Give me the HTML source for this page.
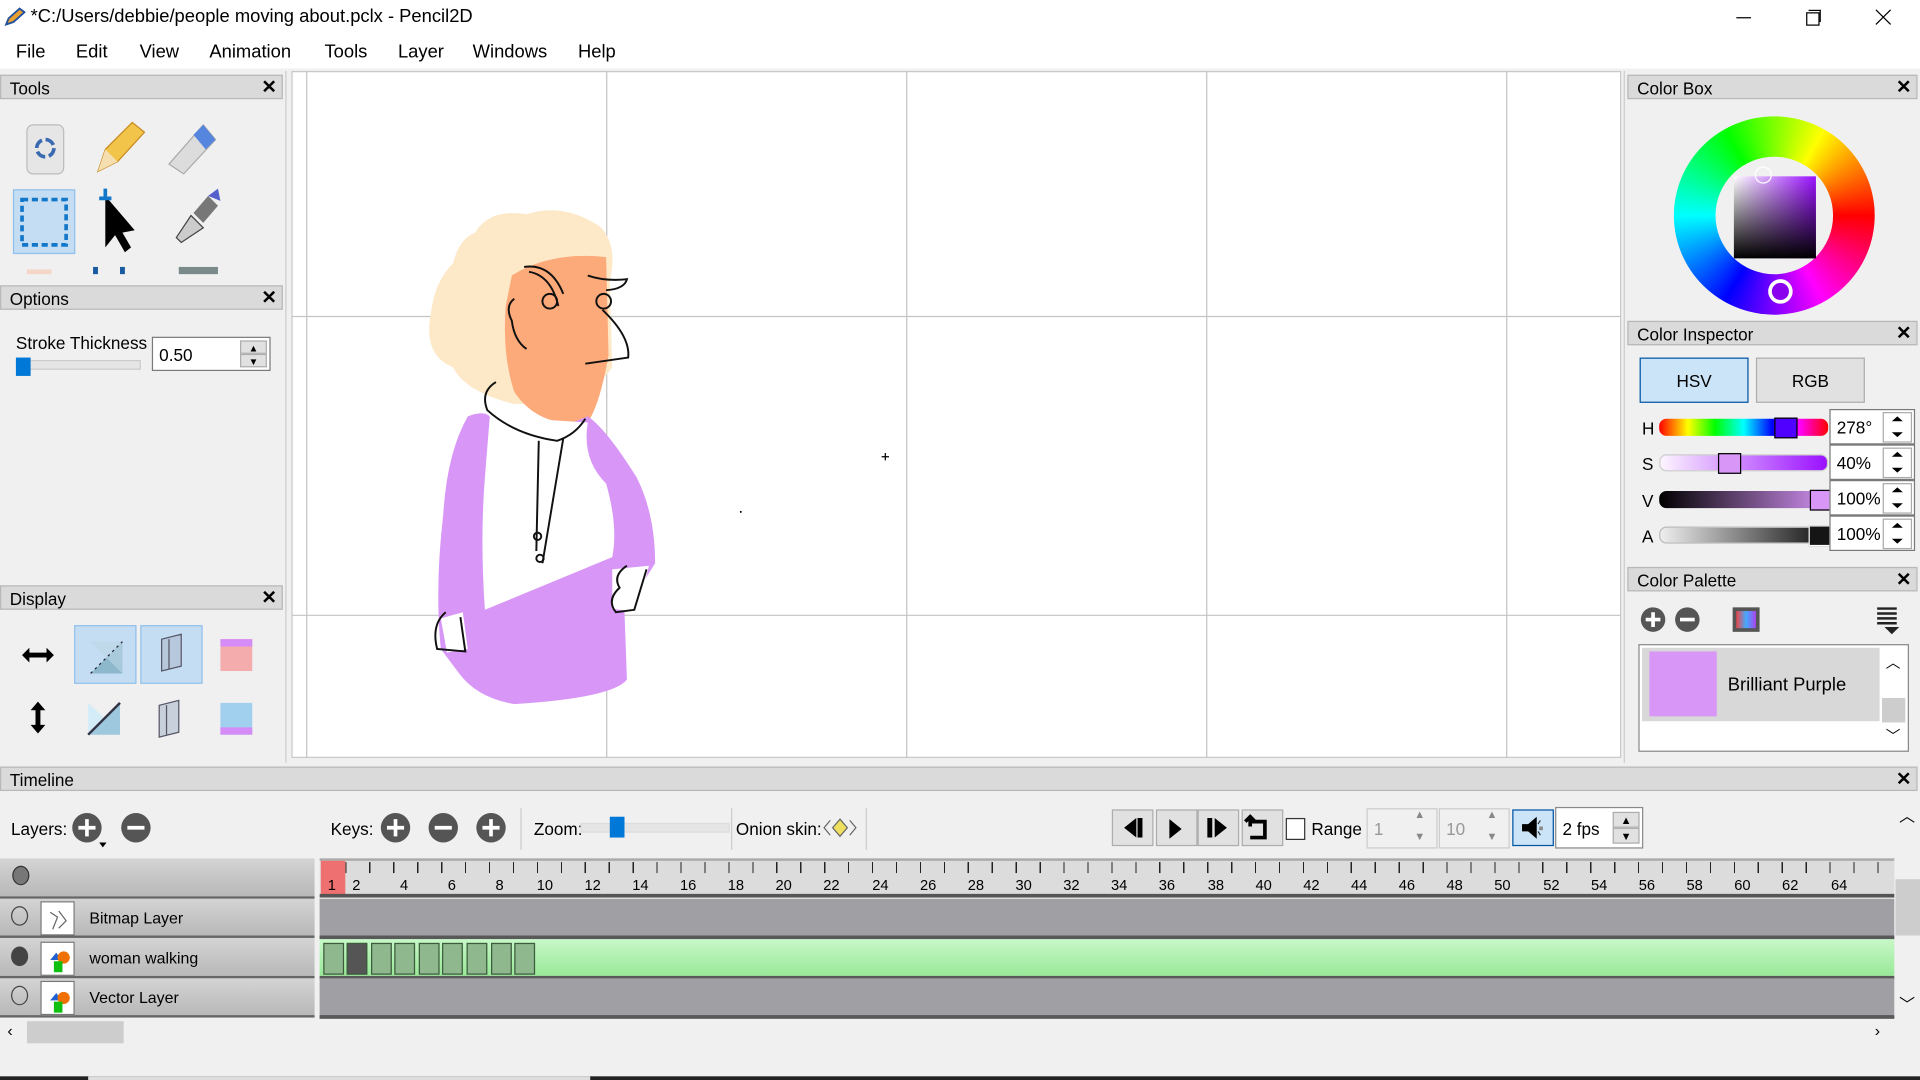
<!DOCTYPE html>
<html><head><meta charset="utf-8">
<style>
html,body{margin:0;padding:0;width:1920px;height:1080px;overflow:hidden;background:#f0f0f0;}
#w{position:absolute;left:0;top:0;width:1568px;height:882px;transform:scale(1.22449);transform-origin:0 0;font-family:"Liberation Sans",sans-serif;font-size:14px;color:#000;background:#f0f0f0;}
.a{position:absolute;}
.hdr{position:absolute;height:20px;background:#dadada;border:1px solid #b8b8b8;font-size:14px;line-height:20px;padding-left:7px;box-sizing:border-box;}
.x{position:absolute;right:4px;top:0;font-weight:bold;font-size:15px;}
.t{position:absolute;white-space:nowrap;}
.menu span{position:absolute;top:34px;font-size:15px;}
.btn{position:absolute;background:#e1e1e1;border:1px solid #adadad;box-sizing:border-box;}
.spin{position:absolute;background:#fff;border:1px solid #7a7a7a;box-sizing:border-box;}
.row{position:absolute;left:0;width:257px;height:32px;background:linear-gradient(#d4d4d4,#b8b8b8);border-bottom:2px solid #666;box-sizing:border-box;}
.track{position:absolute;left:261px;width:1286px;height:33px;background:#a09fa4;border-bottom:3px solid #595959;box-sizing:border-box;}
.key{position:absolute;top:3px;width:17px;height:26px;background:#8fb88f;border:1px solid #3c5c3c;box-sizing:border-box;}
.circ{position:absolute;left:9px;width:14px;height:16px;border:1.5px solid #444;border-radius:50%;box-sizing:border-box;}
.ico{position:absolute;left:33px;width:28px;height:28px;background:#fff;border:1px solid #777;box-sizing:border-box;}
</style></head><body><div id="w">
<!-- title bar -->
<div class="a" style="left:0;top:0;width:1568px;height:28px;background:#fff"></div>
<svg class="a" style="left:3px;top:6px" width="18" height="16"><path d="M2 14 L4 9 L13 1 L17 4 L8 12 Z" fill="#e8a030" stroke="#2050a0" stroke-width="1.5"/></svg>
<div class="t" style="left:25px;top:5px;font-size:15px">*C:/Users/debbie/people moving about.pclx - Pencil2D</div>
<div class="a" style="left:1418px;top:14px;width:12px;height:1px;background:#000"></div>
<div class="a" style="left:1475px;top:10px;width:9px;height:9px;border:1px solid #000;background:#fff"></div>
<div class="a" style="left:1477px;top:8px;width:9px;height:9px;border-top:1px solid #000;border-right:1px solid #000"></div>
<svg class="a" style="left:1531px;top:7px" width="14" height="14"><path d="M1 1L13 13M13 1L1 13" stroke="#000" stroke-width="1"/></svg>
<div class="a" style="left:0;top:28px;width:1568px;height:28px;background:#fff"></div>
<div class="menu"><span style="left:13px">File</span><span style="left:62px">Edit</span><span style="left:114px">View</span><span style="left:171px">Animation</span><span style="left:265px">Tools</span><span style="left:325px">Layer</span><span style="left:386px">Windows</span><span style="left:472px">Help</span></div>

<!-- left panels -->
<div class="hdr" style="left:0;top:61px;width:231px">Tools<span class="x">✕</span></div>
<svg class="a" style="left:8px;top:92px" width="220" height="132">
<rect x="14" y="10" width="30" height="40" rx="5" fill="#e6e6e6" stroke="#bbb"/><circle cx="29" cy="29" r="7" fill="none" stroke="#3a6ab0" stroke-width="3" stroke-dasharray="8 3"/>
<path d="M72 48 L78 30 L100 8 L110 16 L88 40 Z" fill="#f2c44a" stroke="#c88a20"/><path d="M72 48 L78 30 L88 40Z" fill="#f5deb0"/>
<path d="M130 42 L158 10 L168 22 L142 50 Z" fill="#dcdcdc" stroke="#aaa"/><path d="M150 18 L158 10 L168 22 L160 30Z" fill="#5585dd"/>
<rect x="3" y="63" width="50" height="52" fill="#c4ddf2" stroke="#8ec0ec"/><rect x="10" y="71" width="36" height="37" fill="none" stroke="#1277c9" stroke-width="3" stroke-dasharray="5 3"/>
<path d="M78 68 L78 110 L86 100 L94 114 L99 110 L92 98 L102 96 Z" fill="#000"/><path d="M78 70v-8M73 70h10" stroke="#1277c9" stroke-width="3"/>
<path d="M136 102 L148 84 L158 94 L140 106Z" fill="#ccc" stroke="#444"/><path d="M150 82 L162 68 L170 76 L158 90Z" fill="#777"/><path d="M162 68 L170 62 L172 72Z" fill="#5560cc"/>
<rect x="14" y="128" width="20" height="4" fill="#f5d5c8"/><rect x="68" y="126" width="4" height="6" fill="#1a5aa0"/><rect x="90" y="126" width="4" height="6" fill="#1a5aa0"/><rect x="138" y="126" width="32" height="6" fill="#7a8a8a"/>
</svg>
<div class="hdr" style="left:0;top:233px;width:231px">Options<span class="x">✕</span></div>
<div class="t" style="left:13px;top:272px;font-size:14px">Stroke Thickness</div>
<div class="a" style="left:13px;top:294px;width:100px;height:6px;background:#e5e5e5;border:1px solid #ccc"></div>
<div class="a" style="left:13px;top:292px;width:12px;height:15px;background:#0078d7"></div>
<div class="spin" style="left:124px;top:275px;width:97px;height:28px"><span class="t" style="left:5px;top:6px">0.50</span><div class="btn" style="left:71px;top:2px;width:22px;height:11px;font-size:8px;text-align:center;line-height:11px">▲</div><div class="btn" style="left:71px;top:13px;width:22px;height:11px;font-size:8px;text-align:center;line-height:11px">▼</div></div>
<div class="hdr" style="left:0;top:478px;width:231px">Display<span class="x">✕</span></div>
<svg class="a" style="left:0;top:500px" width="232" height="120">
<path d="M18 35 L24 29 V33 H38 V29 L44 35 L38 41 V37 H24 V41Z" fill="#000"/>
<rect x="61" y="11" width="50" height="47" fill="#c4ddf2" stroke="#8ec0ec"/><path d="M74 50 L100 24 V50Z" fill="#8db8cc"/><path d="M74 24h26v26z" fill="#bcd6e4" opacity=".6"/><path d="M74 50L100 24" stroke="#223" stroke-dasharray="2 3"/>
<rect x="115" y="11" width="50" height="47" fill="#c4ddf2" stroke="#8ec0ec"/><path d="M132 22 L148 18 V44 L132 48Z" fill="#b8c8dc" stroke="#556"/><path d="M138 22 V46" stroke="#556"/>
<rect x="180" y="22" width="26" height="26" fill="#f4acac"/><rect x="180" y="22" width="26" height="6" fill="#d58cf7"/>
<path d="M31 73 L37 80 H33 V92 H37 L31 99 L25 92 H29 V80 H25Z" fill="#000"/>
<path d="M72 100 L98 74 V100Z" fill="#9ec8de"/><path d="M72 74 L86 87 L72 100Z" fill="#d4ecf8"/><path d="M72 100L98 74" stroke="#334" stroke-width="2"/>
<path d="M130 76 L146 72 V98 L130 102Z" fill="#c8d0dc" stroke="#556"/><path d="M136 76 V100" stroke="#556"/>
<rect x="180" y="74" width="26" height="26" fill="#a0d0ee"/><rect x="180" y="94" width="26" height="6" fill="#d58cf7"/>
</svg>
<div class="a" style="left:233px;top:58px;width:1px;height:565px;background:#ccc"></div>

<!-- canvas -->
<div class="a" style="left:238px;top:58px;width:1086px;height:561px;background:#fff;border:1px solid #c8c8c8;box-sizing:border-box"></div>
<svg class="a" style="left:238px;top:58px" width="1086" height="561">
<g stroke="#c4c4c4" stroke-width="1"><path d="M12.5 0V561M257.5 0V561M502.5 0V561M747.5 0V561M992.5 0V561M0 200.5H1086M0 444.5H1086"/></g>
<g transform="translate(-238,-58)">
<path d="M388 190 Q400 170 430 175 Q460 165 490 185 Q505 200 498 230 L500 300 Q480 330 420 330 Q380 320 370 300 Q345 290 352 255 Q355 230 370 215 Q375 195 388 190Z" fill="#fde8c8"/>
<path d="M418 225 Q450 205 495 210 L497 290 Q490 330 480 345 Q440 350 420 320 Q410 290 413 250Z" fill="#fdaa7a"/>
<path d="M382 340 Q395 335 400 340 L405 370 L480 340 Q495 350 520 390 Q535 420 535 460 L510 500 L512 555 Q500 570 420 575 Q390 570 375 550 L360 530 Q355 480 362 420 Q365 370 382 340Z" fill="#d896f6"/>
<path d="M400 340 L480 345 Q475 375 495 395 Q505 430 500 455 L396 498 Q392 440 396 390Z" fill="#fff"/>
<path d="M360 505 L378 500 L382 530 L365 533Z M500 465 L530 462 L520 500 L500 497Z" fill="#fff"/>
<g fill="none" stroke="#111" stroke-width="1.6">
<path d="M428 218 Q450 215 460 240 M432 222 Q450 225 456 250"/><path d="M480 225 Q495 230 512 228 Q510 236 495 237"/>
<circle cx="449" cy="246" r="6"/><circle cx="493" cy="246" r="6"/>
<path d="M492 253 Q515 275 513 292 L478 297"/><path d="M420 244 Q412 250 418 262 Q420 278 430 285"/>
<path d="M405 312 Q392 320 398 335 Q420 355 455 360 Q470 355 478 342"/><path d="M440 360 L438 450 M460 358 L443 460"/><circle cx="439" cy="438" r="3"/><circle cx="441" cy="456" r="3"/>
<path d="M364 500 Q352 510 357 530 L380 532 L376 504"/><path d="M512 462 Q500 470 506 480 Q495 490 503 500 L518 498 L528 465"/>
</g>
<path d="M720 373h6M723 370v6" stroke="#000"/><circle cx="605" cy="418" r=".8" fill="#000"/>
</g></svg>

<!-- right panel -->
<div class="a" style="left:1326px;top:58px;width:1px;height:565px;background:#ccc"></div>
<div class="hdr" style="left:1329px;top:61px;width:237px">Color Box<span class="x">✕</span></div>
<div class="a" style="left:1367px;top:95px;width:164px;height:162px;border-radius:50%;background:conic-gradient(from 90deg,#f00,#f0f,#00f,#0ff,#0f0,#ff0,#f00)"></div>
<div class="a" style="left:1401px;top:128px;width:96px;height:96px;border-radius:50%;background:#f0f0f0"></div>
<div class="a" style="left:1416px;top:144px;width:67px;height:67px;background:linear-gradient(transparent,#000),linear-gradient(90deg,#fff,#9a10ff)"></div>
<div class="a" style="left:1433px;top:136px;width:12px;height:12px;border:1px solid #fff;border-radius:50%"></div>
<div class="a" style="left:1444px;top:228px;width:20px;height:20px;border:3px solid #fff;border-radius:50%;box-sizing:border-box;background:#8a00ee"></div>
<div class="hdr" style="left:1329px;top:262px;width:237px">Color Inspector<span class="x">✕</span></div>
<div class="btn" style="left:1339px;top:292px;width:89px;height:37px;background:#cce4f7;border-color:#0054a4;text-align:center;line-height:36px">HSV</div>
<div class="btn" style="left:1434px;top:292px;width:89px;height:37px;text-align:center;line-height:36px">RGB</div>
<div class="t" style="left:1341px;top:342px">H</div><div class="t" style="left:1341px;top:371px">S</div><div class="t" style="left:1341px;top:401px">V</div><div class="t" style="left:1341px;top:430px">A</div>
<div class="a" style="left:1355px;top:342px;width:138px;height:14px;border-radius:6px;background:linear-gradient(90deg,#f00,#ff0 17%,#0f0 33%,#0ff 50%,#00f 67%,#f0f 83%,#f00)"></div>
<div class="a" style="left:1449px;top:341px;width:17px;height:15px;border:1px solid #000;background:#5000ff"></div>
<div class="a" style="left:1355px;top:371px;width:138px;height:14px;border-radius:6px;background:linear-gradient(90deg,#fdf5ff,#9a10ff);border:1px solid #ccc;box-sizing:border-box"></div>
<div class="a" style="left:1403px;top:370px;width:17px;height:15px;border:1px solid #000;background:#d896f6"></div>
<div class="a" style="left:1355px;top:401px;width:138px;height:14px;border-radius:6px;background:linear-gradient(90deg,#000,#d090f0)"></div>
<div class="a" style="left:1478px;top:400px;width:16px;height:15px;border:1px solid #000;background:#d896f6"></div>
<div class="a" style="left:1355px;top:430px;width:138px;height:14px;border-radius:6px;background:linear-gradient(90deg,#eee,#111);border:1px solid #bbb;box-sizing:border-box"></div>
<div class="a" style="left:1477px;top:429px;width:16px;height:15px;border:1px solid #fff;background:#151515"></div>
<div class="spin" style="left:1494px;top:334px;width:70px;height:29px"><span class="t" style="left:5px;top:6px">278°</span></div>
<div class="spin" style="left:1494px;top:363px;width:70px;height:29px"><span class="t" style="left:5px;top:6px">40%</span></div>
<div class="spin" style="left:1494px;top:392px;width:70px;height:29px"><span class="t" style="left:5px;top:6px">100%</span></div>
<div class="spin" style="left:1494px;top:421px;width:70px;height:29px"><span class="t" style="left:5px;top:6px">100%</span></div>
<svg class="a" style="left:1537px;top:336px" width="25" height="114"><g fill="#000"><path d="M8 8h9l-4.5-4z"/><path d="M8 17h9l-4.5 4z"/><path d="M8 37h9l-4.5-4z"/><path d="M8 46h9l-4.5 4z"/><path d="M8 66h9l-4.5-4z"/><path d="M8 75h9l-4.5 4z"/><path d="M8 95h9l-4.5-4z"/><path d="M8 104h9l-4.5 4z"/></g><g stroke="#aaa" fill="none"><rect x="1" y="1" width="23" height="24"/><rect x="1" y="30" width="23" height="24"/><rect x="1" y="59" width="23" height="24"/><rect x="1" y="88" width="23" height="24"/></g></svg>
<div class="hdr" style="left:1329px;top:463px;width:237px">Color Palette<span class="x">✕</span></div>
<svg class="a" style="left:1339px;top:494px" width="220" height="26"><circle cx="11" cy="12" r="10" fill="#555"/><path d="M5 12h12M11 6v12" stroke="#fff" stroke-width="3"/><circle cx="39" cy="12" r="10" fill="#555"/><path d="M33 12h12" stroke="#fff" stroke-width="3"/><rect x="76" y="2" width="22" height="20" fill="#555"/><rect x="79" y="5" width="16" height="14" fill="url(#g1)"/><defs><linearGradient id="g1"><stop offset="0" stop-color="#e44"/><stop offset=".5" stop-color="#4af"/><stop offset="1" stop-color="#a4e"/></linearGradient></defs><path d="M194 3h16M194 7h16M194 11h16M194 15h16" stroke="#222" stroke-width="2"/><path d="M200 18h12l-6 6z" fill="#222"/></svg>
<div class="a" style="left:1338px;top:526px;width:221px;height:88px;background:#fff;border:1px solid #888;box-sizing:border-box"></div>
<div class="a" style="left:1341px;top:529px;width:194px;height:60px;background:#d8d8d8"></div>
<div class="a" style="left:1347px;top:532px;width:55px;height:53px;background:#d896f6"></div>
<div class="t" style="left:1411px;top:551px;font-size:15px">Brilliant Purple</div>
<div class="a" style="left:1537px;top:570px;width:19px;height:20px;background:#cdcdcd"></div>
<div class="t" style="left:1540px;top:532px;font-size:12px">︿</div><div class="t" style="left:1540px;top:592px;font-size:12px">﹀</div>

<!-- timeline -->
<div class="hdr" style="left:0;top:626px;width:1566px">Timeline<span class="x">✕</span></div>
<div class="t" style="left:9px;top:669px">Layers:</div>
<svg class="a" style="left:58px;top:661px" width="70" height="32"><circle cx="13" cy="15" r="12" fill="#555"/><path d="M6 15h14M13 8v14" stroke="#fff" stroke-width="3"/><path d="M23 27h6l-3 4z" fill="#000"/><circle cx="53" cy="15" r="12" fill="#555"/><path d="M46 15h14" stroke="#fff" stroke-width="3"/></svg>
<div class="t" style="left:270px;top:669px">Keys:</div>
<svg class="a" style="left:309px;top:661px" width="110" height="32"><circle cx="14" cy="15" r="12" fill="#555"/><path d="M7 15h14M14 8v14" stroke="#fff" stroke-width="3"/><circle cx="53" cy="15" r="12" fill="#555"/><path d="M46 15h14" stroke="#fff" stroke-width="3"/><circle cx="92" cy="15" r="12" fill="#555"/><path d="M85 15h14M92 8v14" stroke="#fff" stroke-width="3"/></svg>
<div class="a" style="left:425px;top:660px;width:1px;height:34px;background:#ccc"></div>
<div class="t" style="left:436px;top:669px">Zoom:</div>
<div class="a" style="left:474px;top:672px;width:120px;height:6px;background:#e5e5e5;border:1px solid #ddd"></div>
<div class="a" style="left:498px;top:667px;width:12px;height:17px;background:#0078d7"></div>
<div class="a" style="left:597px;top:660px;width:1px;height:34px;background:#ccc"></div>
<div class="t" style="left:601px;top:669px">Onion skin:</div>
<svg class="a" style="left:672px;top:667px" width="28" height="18"><path d="M6 3L1 9l5 6M22 3l5 6-5 6" stroke="#666" fill="none"/><path d="M14 2l6 7-6 7-6-7z" fill="#f0e060" stroke="#666"/></svg>
<div class="a" style="left:707px;top:660px;width:1px;height:34px;background:#ccc"></div>
<div class="btn" style="left:908px;top:661px;width:34px;height:30px"></div><div class="btn" style="left:944px;top:661px;width:34px;height:30px"></div><div class="btn" style="left:978px;top:661px;width:34px;height:30px"></div><div class="btn" style="left:1014px;top:661px;width:34px;height:30px"></div>
<svg class="a" style="left:908px;top:661px" width="140" height="30"><path d="M10 15l10-8v16z M21 7h4v16h-4z" fill="#000"/><path d="M47 8l10 8-10 8z" fill="#000"/><path d="M78 7h4v16h-4z M84 7l10 8-10 8z" fill="#000"/><path d="M113 10h12v13h-12 M113 6v8M109 10l4-4 4 4" stroke="#000" stroke-width="3" fill="none"/></svg>
<div class="a" style="left:1050px;top:668px;width:16px;height:18px;background:#fff;border:1px solid #333;box-sizing:border-box"></div>
<div class="t" style="left:1071px;top:669px">Range</div>
<div class="a" style="left:1116px;top:660px;width:58px;height:33px;border:1px solid #ccc;box-sizing:border-box"></div><div class="t" style="left:1122px;top:669px;color:#999">1</div>
<div class="a" style="left:1175px;top:660px;width:58px;height:33px;border:1px solid #ccc;box-sizing:border-box"></div><div class="t" style="left:1181px;top:669px;color:#999">10</div>
<div class="t" style="left:1155px;top:660px;font-size:9px;color:#888">▲</div><div class="t" style="left:1155px;top:678px;font-size:9px;color:#888">▼</div>
<div class="t" style="left:1214px;top:660px;font-size:9px;color:#888">▲</div><div class="t" style="left:1214px;top:678px;font-size:9px;color:#888">▼</div>
<div class="btn" style="left:1235px;top:661px;width:34px;height:30px;background:#cce4f7;border-color:#0054a4"></div>
<svg class="a" style="left:1240px;top:664px" width="26" height="24"><path d="M3 9h5l7-6v18l-7-6h-5z" fill="#000"/><path d="M18 6l-2 3M18 18l-2-3" stroke="#333"/><rect x="17" y="11" width="3" height="3" fill="#888"/></svg>
<div class="spin" style="left:1270px;top:659px;width:72px;height:34px;border-color:#888"><span class="t" style="left:5px;top:9px">2 fps</span><div class="btn" style="left:46px;top:3px;width:22px;height:13px;font-size:9px;text-align:center;line-height:13px">▲</div><div class="btn" style="left:46px;top:16px;width:22px;height:13px;font-size:9px;text-align:center;line-height:13px">▼</div></div>
<div class="t" style="left:1551px;top:656px;font-size:13px">︿</div>

<!-- ruler -->
<div class="row" style="top:701px;height:33px"></div>
<div class="a" style="left:10px;top:707px;width:14px;height:16px;border-radius:50%;background:#777;border:1px solid #333;box-sizing:border-box"></div>
<div class="a" style="left:261px;top:701px;width:1286px;height:31px;background:#dcdcdc;border-top:2px solid #aaa;box-sizing:border-box"></div>
<div class="a" style="left:262px;top:703px;width:20px;height:29px;background:#ee7070"></div>
<div class="a" style="left:282px;top:704px;width:1262px;height:9px;background:repeating-linear-gradient(90deg,#222 0 1px,transparent 1px 19.55px)"></div>
<div class="a" style="left:261px;top:730px;width:1286px;height:3px;background:#555"></div>
<svg class="a" style="left:261px;top:706px" width="1286" height="26" font-family="Liberation Sans" font-size="12" fill="#000" text-anchor="middle">
<text x="10" y="21">1</text><text x="30" y="21">2</text><text x="69" y="21">4</text><text x="108" y="21">6</text><text x="147" y="21">8</text><text x="184" y="21">10</text><text x="223" y="21">12</text><text x="262" y="21">14</text><text x="301" y="21">16</text><text x="340" y="21">18</text><text x="379" y="21">20</text><text x="418" y="21">22</text><text x="458" y="21">24</text><text x="497" y="21">26</text><text x="536" y="21">28</text><text x="575" y="21">30</text><text x="614" y="21">32</text><text x="653" y="21">34</text><text x="692" y="21">36</text><text x="732" y="21">38</text><text x="771" y="21">40</text><text x="810" y="21">42</text><text x="849" y="21">44</text><text x="888" y="21">46</text><text x="927" y="21">48</text><text x="966" y="21">50</text><text x="1006" y="21">52</text><text x="1045" y="21">54</text><text x="1084" y="21">56</text><text x="1123" y="21">58</text><text x="1162" y="21">60</text><text x="1201" y="21">62</text><text x="1241" y="21">64</text>
</svg>
<!-- layers -->
<div class="row" style="top:734px;height:32px"></div><div class="circ" style="top:740px"></div><div class="ico" style="top:736px"></div><div class="t" style="left:73px;top:742px;font-size:13px">Bitmap Layer</div>
<div class="row" style="top:766px;height:33px"></div><div class="circ" style="top:773px;background:#444"></div><div class="ico" style="top:769px"></div><div class="t" style="left:73px;top:775px;font-size:13px">woman walking</div>
<div class="row" style="top:799px;height:32px"></div><div class="circ" style="top:805px"></div><div class="ico" style="top:801px"></div><div class="t" style="left:73px;top:807px;font-size:13px">Vector Layer</div>
<svg class="a" style="left:38px;top:740px" width="20" height="90"><path d="M3 5l6 4-4 10M10 4l6 8-6 6" stroke="#666" fill="none"/><path d="M3 44l5-6 4 6z" fill="#2060d0"/><circle cx="14" cy="42" r="5" fill="#f07000"/><rect x="6" y="45" width="7" height="9" fill="#10c010"/><path d="M3 77l5-6 4 6z" fill="#2060d0"/><circle cx="14" cy="75" r="5" fill="#f07000"/><rect x="6" y="78" width="7" height="9" fill="#10c010"/></svg>
<div class="a" style="left:257px;top:701px;width:4px;height:130px;background:#f0f0f0"></div>
<div class="track" style="top:734px"></div>
<div class="track" style="top:767px;background:linear-gradient(#c8f8c8,#98e898)"></div>
<div class="track" style="top:799px"></div>
<div class="a" style="left:261px;top:767px">
<div class="key" style="left:3px"></div><div class="key" style="left:22px;background:#555"></div><div class="key" style="left:42px"></div><div class="key" style="left:61px"></div><div class="key" style="left:81px"></div><div class="key" style="left:100px"></div><div class="key" style="left:120px"></div><div class="key" style="left:140px"></div><div class="key" style="left:159px"></div></div>
<div class="a" style="left:1548px;top:718px;width:20px;height:46px;background:#cdcdcd"></div>
<div class="t" style="left:1551px;top:810px;font-size:13px">﹀</div>
<div class="a" style="left:22px;top:834px;width:79px;height:18px;background:#cdcdcd"></div>
<div class="t" style="left:6px;top:834px;font-size:13px">‹</div><div class="t" style="left:1531px;top:834px;font-size:13px">›</div>
<div class="a" style="left:0;top:879px;width:1568px;height:3px;background:#222"></div>
<div class="a" style="left:72px;top:879px;width:410px;height:3px;background:#ddd"></div>
</div></body></html>
